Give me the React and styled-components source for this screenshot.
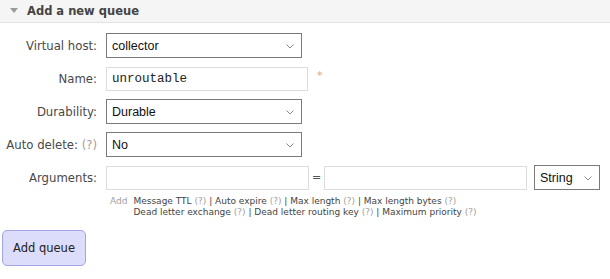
import React from "react";
import styled, { createGlobalStyle } from "styled-components";

const Global = createGlobalStyle`
  html, body { margin: 0; padding: 0; background: #fff; }
  body { font-family: "DejaVu Sans", Verdana, sans-serif; color: #484848; }
`;

const Page = styled.div`
  width: 610px;
  height: 279px;
  overflow: hidden;
`;

const Header = styled.div`
  height: 23px;
  background: #f5f5f5;
  border-bottom: 1px solid #e3e3e3;
  display: flex;
  align-items: center;
  padding-left: 10px;
  gap: 9px;
  box-sizing: border-box;
`;

const Title = styled.h2`
  margin: 0;
  font-size: 11.5px;
  font-weight: bold;
  color: #444;
`;

const Form = styled.div`
  padding-top: 10px;
  display: flex;
  flex-direction: column;
  gap: 8px;
`;

const Row = styled.div`
  display: flex;
  align-items: center;
  height: 25px;
`;

const Label = styled.label`
  width: 106px;
  padding-right: 9px;
  box-sizing: border-box;
  text-align: right;
  font-size: 11.7px;
  color: #484848;
  white-space: nowrap;
`;

const Help = styled.span`
  color: #a0a0a0;
`;

const SelectWrap = styled.div`
  position: relative;
  width: ${(p) => p.$w}px;
  height: ${(p) => p.$h || 25}px;
`;

const Select = styled.select`
  appearance: none;
  width: 100%;
  height: 100%;
  box-sizing: border-box;
  border: 1px solid #7a7a7a;
  border-radius: 0;
  background: #fff;
  padding: 0 0 0 5px;
  font-family: "Liberation Sans", Arial, sans-serif;
  font-size: 12.5px;
  color: #111;
  margin: 0;
`;

const Chevron = styled.svg`
  position: absolute;
  right: 8px;
  top: 50%;
  margin-top: -2px;
  pointer-events: none;
`;

const TextInput = styled.input`
  width: ${(p) => p.$w}px;
  height: 24px;
  box-sizing: border-box;
  border: 1px solid #dcdcdc;
  padding: 0 5px;
  margin: 0;
  font-family: ${(p) => (p.$mono ? '"Liberation Mono", "Courier New", monospace' : '"Liberation Sans", Arial, sans-serif')};
  font-size: 12.5px;
  color: #222;
  outline: none;
`;

const Star = styled.span`
  color: #f0a060;
  font-size: 11px;
  margin-left: 9px;
  align-self: flex-start;
  margin-top: 3px;
`;

const Eq = styled.span`
  width: 15px;
  text-align: center;
  font-size: 11px;
  color: #555;
`;

const ArgGroup = styled.div`
  display: flex;
  align-items: center;
  margin-right: 7px;
`;

const Hints = styled.div`
  display: flex;
  margin-left: 110px;
  margin-top: 6px;
  font-size: 9px;
  line-height: 11px;
  gap: 6px;
`;

const AddWord = styled.span`
  color: #a0a0a0;
`;

const HintLines = styled.div`
  display: flex;
  flex-direction: column;
  color: #444;
`;

const Button = styled.button`
  display: block;
  margin: 12px 0 0 2px;
  width: 84px;
  height: 36px;
  background: #dcdcfb;
  border: 1px solid #a3a6e6;
  border-radius: 5px;
  font-family: "DejaVu Sans", Verdana, sans-serif;
  font-size: 11.5px;
  color: #222;
  padding: 0;
`;

const Triangle = () => (
  <svg width="8" height="6" viewBox="0 0 8 6">
    <path d="M0 0 L8 0 L4 5 Z" fill="#9a9a9a" />
  </svg>
);

const DropSelect = ({ w, h, value, options }) => (
  <SelectWrap $w={w} $h={h}>
    <Select defaultValue={value}>
      {options.map((o) => (
        <option key={o}>{o}</option>
      ))}
    </Select>
    <Chevron width="8" height="5" viewBox="0 0 8 5">
      <path d="M0.5 0.5 L4 4 L7.5 0.5" fill="none" stroke="#8a8a8a" strokeWidth="1" />
    </Chevron>
  </SelectWrap>
);

const Q = () => <Help>(?)</Help>;

export default function App() {
  return (
    <Page>
      <Global />
      <Header>
        <Triangle />
        <Title>Add a new queue</Title>
      </Header>
      <Form>
        <Row>
          <Label>Virtual host:</Label>
          <DropSelect w={196} value="collector" options={["collector", "/"]} />
        </Row>
        <Row>
          <Label>Name:</Label>
          <TextInput $w={202} $mono defaultValue="unroutable" />
          <Star>*</Star>
        </Row>
        <Row>
          <Label>Durability:</Label>
          <DropSelect w={196} value="Durable" options={["Durable", "Transient"]} />
        </Row>
        <Row>
          <Label>
            Auto delete: <Q />
          </Label>
          <DropSelect w={196} value="No" options={["No", "Yes"]} />
        </Row>
        <Row>
          <Label>Arguments:</Label>
          <ArgGroup>
            <TextInput $w={203} />
            <Eq>=</Eq>
            <TextInput $w={203} />
          </ArgGroup>
          <DropSelect w={66} value="String" options={["String", "Number", "Boolean", "List"]} />
        </Row>
      </Form>
      <Hints>
        <AddWord>Add</AddWord>
        <HintLines>
          <span>
            Message TTL <Q /> | Auto expire <Q /> | Max length <Q /> | Max length bytes <Q />
          </span>
          <span>
            Dead letter exchange <Q /> | Dead letter routing key <Q /> | Maximum priority <Q />
          </span>
        </HintLines>
      </Hints>
      <Button>Add queue</Button>
    </Page>
  );
}
